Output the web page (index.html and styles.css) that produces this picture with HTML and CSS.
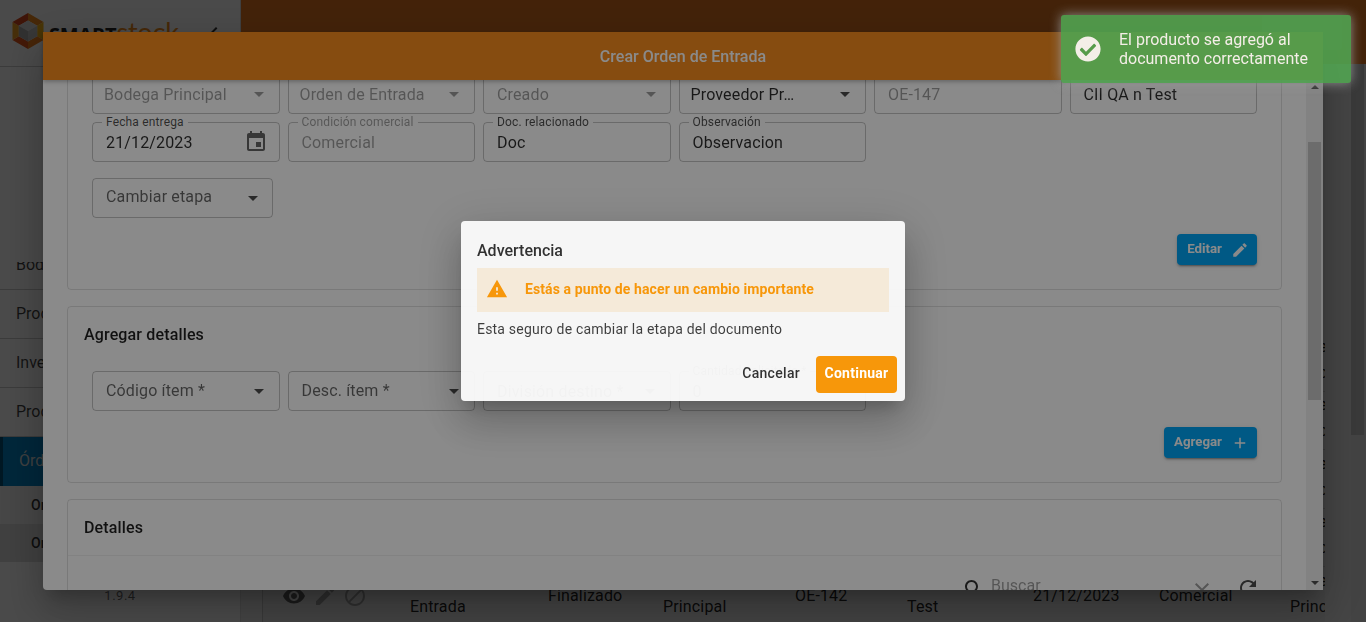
FILE: index.html
```html
<!DOCTYPE html>
<html lang="es">
<head>
  <meta charset="UTF-8" />
  <meta name="viewport" content="width=device-width, initial-scale=1.0"/>
  <title>SmartStock - Crear Orden de Entrada</title>
  <link rel="stylesheet" href="styles.css">
</head>
<body>
  <div class="app">
    <aside class="sidebar">
      <div class="brand">
        <svg class="logo" viewBox="0 0 36 36" width="38" height="38">
          <polygon fill="#f08a1d" points="18,1 32.7,9.5 26.7,13 18,8"/>
          <polygon fill="#f5b316" points="32.7,9.5 32.7,26.5 26.7,23 26.7,13"/>
          <polygon fill="#ef7d1a" points="32.7,26.5 18,35 18,28 26.7,23"/>
          <polygon fill="#e4571c" points="18,35 3.3,26.5 9.3,23 18,28"/>
          <polygon fill="#f0a020" points="3.3,26.5 3.3,9.5 9.3,13 9.3,23"/>
          <polygon fill="#d9481c" points="3.3,9.5 18,1 18,8 9.3,13"/>
          <polygon fill="#d8d8d8" points="18,8 26.7,13 18,18 9.3,13"/>
          <polygon fill="#a8a8a8" points="9.3,13 18,18 18,28 9.3,23"/>
          <polygon fill="#bdbdbd" points="26.7,13 18,18 18,28 26.7,23"/>
        </svg>
        <span class="brand-name">SMART<span class="brand-stock">stock</span></span>
        <svg class="brand-toggle" viewBox="0 0 24 24" width="24" height="24"><path d="M15.41 7.41L14 6l-6 6 6 6 1.41-1.41L10.83 12z"/></svg>
      </div>
      <nav class="menu">
        <a class="menu-item menu-item-cut">Bodegas</a>
        <a class="menu-item">Productos</a>
        <a class="menu-item">Inventario</a>
        <a class="menu-item">Procesos</a>
        <a class="menu-item menu-item-active">Órdenes</a>
        <a class="submenu-item">Orden de entrada</a>
        <a class="submenu-item submenu-item-active">Orden de salida</a>
      </nav>
      <div class="version">1.9.4</div>
    </aside>

    <div class="main">
      <header class="topbar">
        <div class="user-box"></div>
      </header>
      <div class="content">
        <div class="orders">
          <div class="order-row">
            <div class="order-actions"><svg viewBox="0 0 24 24"><path d="M12 4.5C7 4.5 2.73 7.61 1 12c1.73 4.39 6 7.5 11 7.5s9.27-3.11 11-7.5c-1.73-4.39-6-7.5-11-7.5zM12 17c-2.76 0-5-2.24-5-5s2.24-5 5-5 5 2.24 5 5-2.24 5-5 5zm0-8c-1.66 0-3 1.34-3 3s1.34 3 3 3 3-1.34 3-3-1.34-3-3-3z"/></svg></div>
            <div class="cell-two">Orden de<br>Entrada</div><div>Finalizado</div><div class="cell-two">Bodega<br>Principal</div><div>OE-146</div><div class="cell-two">CII QA n<br>Test</div><div>21/12/2023</div><div>Comercial</div><div class="cell-two">Bodega<br>Principal</div>
          </div>
          <div class="order-row">
            <div class="order-actions"><svg viewBox="0 0 24 24"><path d="M12 4.5C7 4.5 2.73 7.61 1 12c1.73 4.39 6 7.5 11 7.5s9.27-3.11 11-7.5c-1.73-4.39-6-7.5-11-7.5zM12 17c-2.76 0-5-2.24-5-5s2.24-5 5-5 5 2.24 5 5-2.24 5-5 5zm0-8c-1.66 0-3 1.34-3 3s1.34 3 3 3 3-1.34 3-3-1.34-3-3-3z"/></svg></div>
            <div class="cell-two">Orden de<br>Entrada</div><div>Finalizado</div><div class="cell-two">Bodega<br>Principal</div><div>OE-145</div><div class="cell-two">CII QA n<br>Test</div><div>21/12/2023</div><div>Comercial</div><div class="cell-two">Bodega<br>Principal</div>
          </div>
          <div class="order-row">
            <div class="order-actions"><svg viewBox="0 0 24 24"><path d="M12 4.5C7 4.5 2.73 7.61 1 12c1.73 4.39 6 7.5 11 7.5s9.27-3.11 11-7.5c-1.73-4.39-6-7.5-11-7.5zM12 17c-2.76 0-5-2.24-5-5s2.24-5 5-5 5 2.24 5 5-2.24 5-5 5zm0-8c-1.66 0-3 1.34-3 3s1.34 3 3 3 3-1.34 3-3-1.34-3-3-3z"/></svg></div>
            <div class="cell-two">Orden de<br>Entrada</div><div>Finalizado</div><div class="cell-two">Bodega<br>Principal</div><div>OE-144</div><div class="cell-two">CII QA n<br>Test</div><div>21/12/2023</div><div>Comercial</div><div class="cell-two">Bodega<br>Principal</div>
          </div>
          <div class="order-row">
            <div class="order-actions"><svg viewBox="0 0 24 24"><path d="M12 4.5C7 4.5 2.73 7.61 1 12c1.73 4.39 6 7.5 11 7.5s9.27-3.11 11-7.5c-1.73-4.39-6-7.5-11-7.5zM12 17c-2.76 0-5-2.24-5-5s2.24-5 5-5 5 2.24 5 5-2.24 5-5 5zm0-8c-1.66 0-3 1.34-3 3s1.34 3 3 3 3-1.34 3-3-1.34-3-3-3z"/></svg></div>
            <div class="cell-two">Orden de<br>Entrada</div><div>Finalizado</div><div class="cell-two">Bodega<br>Principal</div><div>OE-143</div><div class="cell-two">CII QA n<br>Test</div><div>21/12/2023</div><div>Comercial</div><div class="cell-two">Bodega<br>Principal</div>
          </div>
          <div class="order-row">
            <div class="order-actions">
              <svg viewBox="0 0 24 24"><path d="M12 4.5C7 4.5 2.73 7.61 1 12c1.73 4.39 6 7.5 11 7.5s9.27-3.11 11-7.5c-1.73-4.39-6-7.5-11-7.5zM12 17c-2.76 0-5-2.24-5-5s2.24-5 5-5 5 2.24 5 5-2.24 5-5 5zm0-8c-1.66 0-3 1.34-3 3s1.34 3 3 3 3-1.34 3-3-1.34-3-3-3z"/></svg>
              <svg class="icon-off" viewBox="0 0 24 24"><path d="M3 17.25V21h3.75L17.81 9.94l-3.75-3.75L3 17.25zM20.71 7.04c.39-.39.39-1.02 0-1.41l-2.34-2.34c-.39-.39-1.02-.39-1.41 0l-1.83 1.83 3.75 3.75 1.83-1.83z"/></svg>
              <svg class="icon-off" viewBox="0 0 24 24"><path d="M12 2C6.48 2 2 6.48 2 12s4.48 10 10 10 10-4.48 10-10S17.52 2 12 2zM4 12c0-4.42 3.58-8 8-8 1.85 0 3.55.63 4.9 1.69L5.69 16.9C4.63 15.55 4 13.85 4 12zm8 8c-1.85 0-3.55-.63-4.9-1.69L18.31 7.1C19.37 8.45 20 10.15 20 12c0 4.42-3.58 8-8 8z"/></svg>
            </div>
            <div class="cell-two">Orden de<br>Entrada</div><div>Finalizado</div><div class="cell-two">Bodega<br>Principal</div><div>OE-142</div><div class="cell-two">CII QA n<br>Test</div><div>21/12/2023</div><div>Comercial</div><div class="cell-two">Bodega<br>Principal</div>
          </div>
        </div>
        <div class="page-scrollbar"><div class="page-thumb"></div></div>
      </div>
    </div>
  </div>

  <div class="backdrop"></div>

  <section class="modal">
    <header class="modal-title">Crear Orden de Entrada</header>
    <div class="modal-body">
      <div class="modal-scroll">
        <div class="card card-first">
          <div class="field-grid">
            <div class="field field-off"><span>Bodega Principal</span><i class="arrow"></i></div>
            <div class="field field-off"><span>Orden de Entrada</span><i class="arrow"></i></div>
            <div class="field field-off field-input field-status"><span>Creado</span><i class="arrow"></i></div>
            <div class="field field-on"><span>Proveedor Pr…</span><i class="arrow"></i></div>
            <div class="field field-off field-input"><span>OE-147</span></div>
            <div class="field field-on field-input"><span>CII QA n Test</span></div>

            <div class="field field-on field-input">
              <label>Fecha entrega</label><span>21/12/2023</span>
              <svg class="field-icon" viewBox="0 0 24 24"><path d="M17 12h-5v5h5v-5zM16 1v2H8V1H6v2H5c-1.11 0-1.99.9-1.99 2L3 19c0 1.1.89 2 2 2h14c1.1 0 2-.9 2-2V5c0-1.1-.9-2-2-2h-1V1h-2zm3 18H5V8h14v11z"/></svg>
            </div>
            <div class="field field-off field-input"><label>Condición comercial</label><span>Comercial</span></div>
            <div class="field field-on field-input"><label>Doc. relacionado</label><span>Doc</span></div>
            <div class="field field-on field-input"><label>Observación</label><span>Observacion</span></div>
          </div>
          <div class="field field-stage field-input"><span>Cambiar etapa</span><i class="arrow arrow-dark"></i></div>
          <div class="card-actions">
            <button class="btn btn-edit"><span>Editar</span>
              <svg viewBox="0 0 24 24"><path d="M3 17.25V21h3.75L17.81 9.94l-3.75-3.75L3 17.25zM20.71 7.04c.39-.39.39-1.02 0-1.41l-2.34-2.34c-.39-.39-1.02-.39-1.41 0l-1.83 1.83 3.75 3.75 1.83-1.83z"/></svg>
            </button>
          </div>
        </div>

        <div class="card">
          <h2 class="card-title">Agregar detalles</h2>
          <div class="field-grid">
            <div class="field field-hint field-input"><span>Código ítem *</span><i class="arrow arrow-dark"></i></div>
            <div class="field field-hint field-input"><span>Desc. ítem *</span><i class="arrow arrow-dark"></i></div>
            <div class="field field-off field-input"><span>División destino *</span><i class="arrow"></i></div>
            <div class="field field-off field-input"><label>Cantidad solicitada *</label><span>0</span></div>
          </div>
          <div class="card-actions">
            <button class="btn btn-add"><span>Agregar</span>
              <svg viewBox="0 0 24 24"><path d="M19 13h-6v6h-2v-6H5v-2h6V5h2v6h6v2z"/></svg>
            </button>
          </div>
        </div>

        <div class="card card-last">
          <h2 class="card-title card-title-line">Detalles</h2>
          <div class="table-tools">
            <svg class="tool-search" viewBox="0 0 24 24"><path d="M15.5 14h-.79l-.28-.27C15.41 12.59 16 11.11 16 9.5 16 5.91 13.09 3 9.5 3S3 5.91 3 9.5 5.91 16 9.5 16c1.61 0 3.09-.59 4.23-1.57l.27.28v.79l5 4.99L20.49 19l-4.99-5zm-6 0C7.01 14 5 11.99 5 9.5S7.01 5 9.5 5 14 7.01 14 9.5 11.99 14 9.5 14z"/></svg>
            <span class="tool-text">Buscar</span>
            <svg class="tool-clear" viewBox="0 0 24 24"><path d="M19 6.41L17.59 5 12 10.59 6.41 5 5 6.41 10.59 12 5 17.59 6.41 19 12 13.41 17.59 19 19 17.59 13.41 12z"/></svg>
            <svg class="tool-reload" viewBox="0 0 24 24"><path d="M17.65 6.35C16.2 4.9 14.21 4 12 4c-4.42 0-7.99 3.58-7.99 8s3.57 8 7.99 8c3.73 0 6.84-2.55 7.73-6h-2.08c-.82 2.33-3.04 4-5.65 4-3.31 0-6-2.69-6-6s2.69-6 6-6c1.66 0 3.14.69 4.22 1.78L13 11h7V4l-2.35 2.35z"/></svg>
          </div>
        </div>
      </div>
      <div class="modal-scrollbar">
        <i class="sb-up"></i>
        <div class="sb-thumb"></div>
        <i class="sb-down"></i>
      </div>
    </div>
  </section>

  <div class="backdrop backdrop-top">
    <div class="dialog" role="alertdialog">
      <h3 class="dialog-title">Advertencia</h3>
      <div class="dialog-alert">
        <svg viewBox="0 0 24 24"><path d="M1 21h22L12 2 1 21zm12-3h-2v-2h2v2zm0-4h-2v-4h2v4z"/></svg>
        <span>Estás a punto de hacer un cambio importante</span>
      </div>
      <p class="dialog-text">Esta seguro de cambiar la etapa del documento</p>
      <div class="dialog-actions">
        <button class="dialog-cancel">Cancelar</button>
        <button class="dialog-ok">Continuar</button>
      </div>
    </div>
  </div>

  <div class="toast" role="alert">
    <svg viewBox="0 0 512 512"><path d="M504 256c0 137-111 248-248 248S8 393 8 256 119 8 256 8s248 111 248 248zM227.3 387.3l184-184c6.2-6.2 6.2-16.4 0-22.6l-22.6-22.6c-6.2-6.2-16.4-6.2-22.6 0L216 308.1l-70.1-70.1c-6.2-6.2-16.4-6.2-22.6 0l-22.6 22.6c-6.2 6.2-6.2 16.4 0 22.6l104 104c6.2 6.3 16.4 6.3 22.6 0z"/></svg>
    <span>El producto se agregó al documento correctamente</span>
  </div>
</body>
</html>
```

FILE: styles.css
```css
/* Base */
*, *::before, *::after {
  box-sizing: border-box;
}
html, body {
  height: 100%;
}
body {
  margin: 0;
  overflow: hidden;
  font-family: Roboto, sans-serif;
  font-size: 16px;
  color: rgba(0,0,0,0.87);
  background-color: #fff;
}
.app {
  display: flex;
  height: 100vh;
}

/* Menu lateral */
.sidebar {
  flex: 0 0 241px;
  display: flex;
  flex-direction: column;
  background-color: #fff;
  border-right: 1px solid #ddd;
}
.brand {
  display: flex;
  align-items: center;
  height: 67px;
  padding-left: 9px;
  border-bottom: 1px solid #ccc;
  flex-shrink: 0;
}
.logo {
  margin-bottom: 5px;
}
.brand-name {
  margin: 0 0 4px 2px;
  font-family: "Open Sans", sans-serif;
  font-size: 20px;
  font-weight: 700;
  color: #222;
  letter-spacing: -0.2px;
}
.brand-stock {
  font-family: Lato, sans-serif;
  font-size: 27px;
  font-weight: 400;
  color: #f08a1d;
}
.brand-toggle {
  margin-left: auto;
  margin-right: 14px;
  fill: #333;
}
.menu {
  display: flex;
  flex-direction: column;
  padding-top: 195px;
}
.menu-item {
  display: flex;
  align-items: center;
  height: 49px;
  padding: 0 0 2px 16px;
  border-bottom: 1px solid #ccc;
  color: rgba(0,0,0,0.75);
}
.menu-item-cut {
  height: 28px;
  align-items: flex-end;
  padding-bottom: 16px;
  overflow: hidden;
  line-height: 16px;
}
.menu-item-active {
  border-bottom: 0;
  border-left: 3px solid #00507a;
  background-color: #0085c8;
  color: #ddd;
}
.submenu-item {
  display: flex;
  align-items: center;
  height: 38px;
  padding-left: 31px;
  font-size: 14px;
  font-weight: 500;
  color: rgba(0,0,0,0.8);
  background-color: #f2f2f2;
}
.submenu-item-active {
  background-color: #ddd;
}
.version {
  margin-top: 26px;
  text-align: center;
  font-size: 13px;
  letter-spacing: 0.5px;
  color: rgba(0,0,0,0.6);
}

/* Area principal */
.main {
  flex: 1;
  min-width: 0;
  display: flex;
  flex-direction: column;
}
.topbar {
  flex: 0 0 64px;
  display: flex;
  justify-content: flex-end;
  padding: 15px 24px 14px 0;
  background-color: #e77822;
}
.user-box {
  width: 80px;
  background-color: rgba(255,255,255,0.25);
  border-radius: 4px;
}
.content {
  flex: 1;
  display: flex;
  min-height: 0;
  padding-left: 21px;
  background-color: #ececec;
}
.orders {
  width: 1063px;
  padding-top: 269px;
  overflow: hidden;
  border-left: 1px solid rgba(0,0,0,0.15);
  background-color: #e6e6e6;
}
.order-row {
  display: grid;
  grid-template-columns: 147px 138px 115px 132px 112px 126px 126px 131px 100px;
  align-items: center;
  width: 1127px;
  height: 58.5px;
  line-height: 22px;
  letter-spacing: 0.15px;
  border-bottom: 1px solid rgba(0,0,0,0.12);
}
.cell-two {
  padding-bottom: 4px;
  line-height: 26px;
}
.order-actions {
  display: flex;
  gap: 6.5px;
  padding-left: 19px;
}
.order-actions svg {
  width: 24px;
  height: 24px;
  fill: rgba(0,0,0,0.6);
}
.order-actions .icon-off {
  fill: rgba(0,0,0,0.3);
}
.page-scrollbar {
  width: 15px;
  margin-left: auto;
  background-color: #e6e6e6;
}
.page-thumb {
  width: 13px;
  height: 371px;
  background-color: #c4c4c4;
}

/* Fondo oscuro de los dialogos */
.backdrop {
  position: fixed;
  inset: 0;
  background-color: rgba(0,0,0,0.46);
}
.backdrop-top {
  display: flex;
  align-items: center;
  justify-content: center;
}

/* Modal de la orden */
.modal {
  position: fixed;
  left: 43px;
  top: 32px;
  width: 1280px;
  height: 558px;
  display: flex;
  flex-direction: column;
  background-color: #fff;
  border-radius: 0 0 4px 4px;
  box-shadow: 0 11px 15px -7px rgba(0,0,0,0.2), 0 24px 38px 3px rgba(0,0,0,0.14), 0 9px 46px 8px rgba(0,0,0,0.12);
}
.modal-title {
  position: relative;
  z-index: 1;
  flex: 0 0 48px;
  display: flex;
  align-items: center;
  justify-content: center;
  background-color: #f88d1e;
  color: #fff;
  font-size: 16px;
  font-weight: 500;
  box-shadow: 0 2px 4px rgba(0,0,0,0.25);
}
.modal-body {
  flex: 1;
  min-height: 0;
  display: flex;
}
.modal-scroll {
  flex: 1;
  min-width: 0;
  overflow: hidden;
  padding: 0 24px;
}
.modal-scrollbar {
  flex: 0 0 17px;
  display: flex;
  flex-direction: column;
  align-items: center;
  background-color: #f1f1f1;
}
.sb-thumb {
  width: 13px;
  height: 258px;
  margin-top: 53px;
  background-color: #c8c8c8;
}
.sb-up, .sb-down {
  display: block;
  width: 0;
  height: 0;
  border-left: 4px solid transparent;
  border-right: 4px solid transparent;
}
.sb-up {
  margin-top: 5px;
  border-bottom: 4px solid #505050;
}
.sb-down {
  margin-top: auto;
  margin-bottom: 5px;
  border-top: 4px solid #505050;
}

/* Tarjetas */
.card {
  margin-bottom: 16px;
  padding: 17px 24px 24px;
  border: 1px solid rgba(0,0,0,0.12);
  border-radius: 4px;
}
.card-first {
  margin-top: -30px;
  padding-top: 23px;
}
.card-last {
  padding: 0;
}
.card-title {
  margin: 0 0 25px -8px;
  font-size: 16px;
  font-weight: 500;
  line-height: 22px;
  letter-spacing: 0.15px;
}
.card-last .card-title {
  margin: 0;
  padding: 17px 16px 16px;
  border-bottom: 1px solid rgba(0,0,0,0.06);
}
.card-actions {
  display: flex;
  justify-content: flex-end;
  margin-top: 16px;
}

/* Campos */
.field-grid {
  display: grid;
  grid-template-columns: repeat(6, 1fr);
  gap: 8px;
}
.field {
  position: relative;
  display: flex;
  align-items: center;
  height: 40px;
  padding: 0 11px;
  border: 1px solid rgba(0,0,0,0.23);
  border-radius: 4px;
  letter-spacing: 0.15px;
  white-space: nowrap;
}
.field-input {
  padding-left: 13px;
}
.field-off {
  color: rgba(0,0,0,0.38);
}
.field-on {
  color: rgba(0,0,0,0.82);
}
.field-hint, .field-stage {
  color: rgba(0,0,0,0.6);
}
.field-hint span {
  margin-bottom: 2px;
}
.field-stage {
  width: 181px;
  margin-top: 16px;
}
.field-stage span {
  margin-bottom: 4px;
}
.field label {
  position: absolute;
  left: 9px;
  top: -8px;
  padding: 0 4px;
  font-size: 12px;
  line-height: 14px;
  letter-spacing: 0.15px;
  background-color: #fff;
  color: rgba(0,0,0,0.7);
}
.field-off label {
  color: rgba(0,0,0,0.38);
}
.arrow {
  position: absolute;
  right: 15px;
  top: 17px;
  width: 0;
  height: 0;
  border-left: 5px solid transparent;
  border-right: 5px solid transparent;
  border-top: 5px solid rgba(0,0,0,0.38);
}
.arrow-dark, .field-on .arrow {
  border-top-color: rgba(0,0,0,0.7);
}
.field-stage .arrow, .field-status .arrow {
  right: 14px;
}
.field-icon {
  position: absolute;
  right: 11px;
  top: 7px;
  width: 24px;
  height: 24px;
  fill: rgba(0,0,0,0.6);
}

/* Botones */
.btn {
  display: flex;
  align-items: center;
  height: 31px;
  padding: 0 8px 0 10px;
  border: 0;
  border-radius: 4px;
  background-color: #00a5f5;
  color: #fff;
  font-family: inherit;
  font-size: 13.3px;
  font-weight: 700;
  box-shadow: 0 3px 1px -2px rgba(0,0,0,0.2), 0 2px 2px 0 rgba(0,0,0,0.14), 0 1px 5px 0 rgba(0,0,0,0.12);
}
.btn span {
  margin-bottom: 2px;
}
.btn svg {
  width: 18px;
  height: 18px;
  margin-left: 9px;
  fill: #fff;
}

/* Barra de busqueda de detalles */
.table-tools {
  display: flex;
  align-items: flex-start;
  padding: 20px 21px 0 0;
  color: rgba(0,0,0,0.38);
}
.table-tools svg {
  width: 24px;
  height: 24px;
}
.tool-search {
  margin: 1px 0 0 auto;
  fill: rgba(0,0,0,0.8);
}
.tool-text {
  width: 199px;
  margin-left: 5px;
}
.tool-clear {
  margin-top: 2px;
  fill: rgba(0,0,0,0.38);
}
.tool-reload {
  margin-left: 22px;
  fill: rgba(0,0,0,0.7);
}

/* Dialogo de advertencia */
.dialog {
  width: 444px;
  height: 180px;
  padding: 20px 16px 0;
  border-radius: 4px;
  background-color: rgba(255,255,255,0.92);
  color: rgba(0,0,0,0.8);
  box-shadow: 0 11px 15px -7px rgba(0,0,0,0.2), 0 24px 38px 3px rgba(0,0,0,0.14), 0 9px 46px 8px rgba(0,0,0,0.12);
}
.dialog-title {
  margin: 0;
  font-size: 16px;
  font-weight: 500;
  line-height: 19px;
}
.dialog-alert {
  display: flex;
  align-items: center;
  height: 44px;
  margin-top: 8px;
  padding: 0 0 3px 9px;
  background-color: #f5ead9;
  color: #f7970a;
  font-size: 14px;
  font-weight: 700;
  letter-spacing: 0.1px;
}
.dialog-alert svg {
  width: 22px;
  height: 22px;
  margin-right: 17px;
  fill: #f7970a;
}
.dialog-text {
  margin: 9px 0 0;
  font-size: 14px;
  line-height: 16px;
  letter-spacing: 0.2px;
  color: rgba(0,0,0,0.75);
}
.dialog-actions {
  display: flex;
  align-items: center;
  justify-content: flex-end;
  margin: 19px -8px 0 0;
}
.dialog-cancel, .dialog-ok {
  border: 0;
  font-family: inherit;
  font-size: 14px;
  font-weight: 500;
  letter-spacing: 0.3px;
}
.dialog-cancel {
  padding: 0 0 4px;
  margin-right: 16px;
  background: none;
  color: rgba(0,0,0,0.8);
}
.dialog-ok {
  width: 81px;
  height: 37px;
  padding: 0 0 3px;
  border-radius: 4px;
  background-color: #f7970a;
  color: #fff;
  font-weight: 700;
  letter-spacing: 0.25px;
}

/* Aviso */
.toast {
  position: fixed;
  right: 15px;
  top: 15px;
  display: flex;
  align-items: center;
  width: 290px;
  height: 68px;
  padding-left: 14px;
  border-radius: 3px;
  background-color: #51a351;
  color: #fff;
  font-size: 16px;
  line-height: 19px;
  opacity: 0.9;
  box-shadow: 0 0 12px #999;
}
.toast svg {
  flex: 0 0 26px;
  width: 26px;
  height: 26px;
  margin-right: 18px;
  fill: #fff;
}
```
